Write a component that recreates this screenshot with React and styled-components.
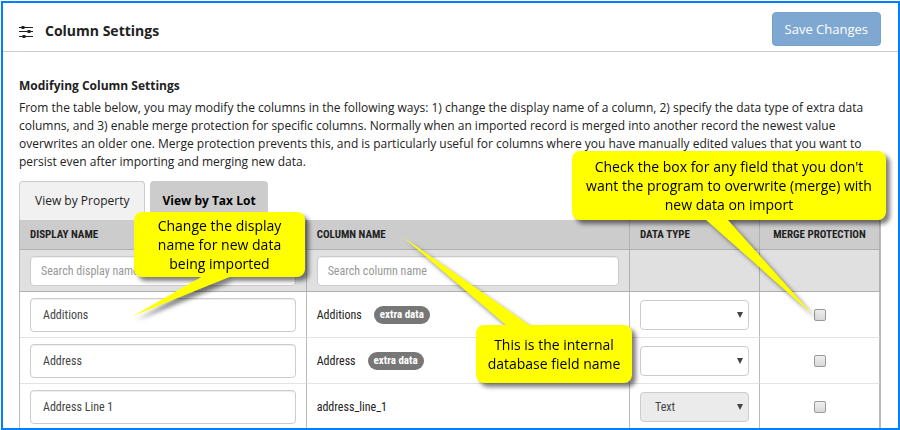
import React from "react";
import styled, { createGlobalStyle } from "styled-components";

const GlobalStyle = createGlobalStyle`
  *, *::before, *::after { box-sizing: border-box; }
  body {
    margin: 0;
    background: #fff;
    color: #222;
    font: 12px/18px "Open Sans", "Noto Sans", sans-serif;
  }
  button, input, select { font: inherit; color: inherit; }
`;

const condensed = `"Roboto Condensed", "Liberation Sans Narrow", Roboto, sans-serif`;

const Page = styled.div`
  position: relative;
  padding: 1px 0 0 1px;
`;

const Frame = styled.div`
  border: 2px solid #0080ff;
`;

const Header = styled.header`
  display: flex;
  align-items: center;
  gap: 12px;
  height: 49px;
  padding: 8px 17px 0 16px;
  border-bottom: 1px solid #ccc;
`;

const HeaderIcon = styled.svg`
  width: 14px;
  height: 14px;
  flex: none;
`;

const Title = styled.h1`
  flex: 1;
  margin: 0;
  font-size: 14px;
  line-height: 20px;
`;

const SaveButton = styled.button`
  height: 34px;
  margin-bottom: 4px;
  padding: 0 12px;
  border: 1px solid #76a3cd;
  border-radius: 4px;
  background: #7ea8d1;
  color: #fff;
  font-size: 13px;
`;

const Content = styled.main`
  padding: 22px 17px 0 16px;
`;

const Heading = styled.h2`
  margin: 0 0 1px;
  font-size: 12px;
  line-height: 24px;
`;

const Intro = styled.p`
  margin: 0 0 10px;
`;

const Tabs = styled.div`
  display: flex;
  gap: 5px;
`;

const Tab = styled.button`
  height: 39px;
  padding: 0 15px;
  border: 1px solid #ccc;
  border-bottom: 0;
  border-radius: 4px 4px 0 0;
  background: ${(p) => (p.$active ? "#ccc" : "#f1f1f1")};
  color: ${(p) => (p.$active ? "#000" : "#222")};
  font-weight: ${(p) => (p.$active ? 700 : 400)};
  ${(p) => p.$active && "padding: 0 11px;"}
`;

const Table = styled.table`
  width: 100%;
  table-layout: fixed;
  border-spacing: 0;
  border-left: 1px solid #bbb;
  border-right: 1px solid #bbb;
  font-family: ${condensed};
`;

const Col = styled.col`
  width: ${(p) => p.$width};
`;

const HeadCell = styled.th`
  height: 30px;
  padding: 0 10px;
  border-right: 1px solid #b0b0b0;
  border-bottom: 1px solid #b0b0b0;
  background: #ccc;
  font-size: 11px;
  text-align: ${(p) => (p.$center ? "center" : "left")};
  white-space: nowrap;
`;

const FilterCell = styled.td`
  height: 42px;
  padding: 6px 10px 5px;
  border-right: 1px solid #b0b0b0;
  border-bottom: 1px solid #b0b0b0;
  background: #e0e0e0;
`;

const Row = styled.tr`
  &:last-child > td {
    padding-bottom: 4px;
    border-bottom: 0;
  }
`;

const Cell = styled.td`
  padding: 6px 10px 5px;
  border-right: 1px solid #bbb;
  border-bottom: 1px solid #e3e3e3;
  vertical-align: middle;
  text-align: ${(p) => (p.$center ? "center" : "left")};
`;

const TextField = styled.input`
  display: block;
  width: 100%;
  height: 34px;
  padding: 0 12px;
  border: 1px solid #ccc;
  border-radius: 4px;
  background: #fff;
  color: #444;
  box-shadow: inset 0 1px 1px rgba(0, 0, 0, 0.07);
`;

const SearchField = styled(TextField)`
  height: 30px;
  padding: 0 10px;
  &::placeholder { color: #999; opacity: 1; }
`;

const Name = styled.div`
  display: flex;
  align-items: center;
  gap: 12px;
`;

const Badge = styled.span`
  padding: 0 6px;
  border-radius: 9px;
  background: #777;
  color: #fff;
  font-size: 11px;
  font-weight: 700;
  line-height: 18px;
`;

const SelectBox = styled.div`
  display: grid;
  align-items: center;
  > * { grid-area: 1 / 1; }
`;

const Select = styled.select`
  appearance: none;
  width: 100%;
  height: 30px;
  padding: 0 14px;
  border: 1px solid #ccc;
  border-radius: 4px;
  background: #fff;
  color: #444;
  opacity: 1;
  &:disabled { background: #ebebeb; }
`;

const Arrow = styled.svg`
  justify-self: end;
  width: 6px;
  height: 6px;
  margin-right: 6px;
  pointer-events: none;
`;

const Checkbox = styled.input`
  appearance: none;
  display: block;
  width: 12px;
  height: 12px;
  margin: 0 auto;
  border: 1px solid #999;
  border-radius: 2px;
  background: linear-gradient(#eee, #d8d8d8);
  &:checked { background: #555; }
`;

const Annotations = styled.div`
  position: absolute;
  inset: 0;
  pointer-events: none;
  filter: drop-shadow(4px 4px 2px rgba(0, 0, 0, 0.5));
`;

const Pointers = styled.svg`
  position: absolute;
  top: 0;
  left: 0;
  width: 900px;
  height: 430px;
  fill: #ff0;
`;

const Callout = styled.div`
  position: absolute;
  left: ${(p) => p.$x}px;
  top: ${(p) => p.$y}px;
  width: ${(p) => p.$w}px;
  height: ${(p) => p.$h}px;
  display: flex;
  align-items: center;
  justify-content: center;
  border-radius: 8px;
  background: #ff0;
  color: #000;
  font-size: 14px;
  line-height: 19px;
  text-align: center;
`;

const rows = [
  { display: "Additions", name: "Additions", extra: true, type: "" },
  { display: "Address", name: "Address", extra: true, type: "" },
  { display: "Address Line 1", name: "address_line_1", extra: false, type: "Text" },
];

function SlidersIcon() {
  return (
    <HeaderIcon viewBox="0 0 14 14" aria-hidden="true">
      <path d="M0 3.5h14M0 7.5h14M0 12.5h14" stroke="#222" strokeWidth="1" />
      <path d="M2.500 2h3v3h-3zM8.500 6h3v3h-3zM3.500 11h3v3h-3z" fill="#222" />
    </HeaderIcon>
  );
}

function DataRow({ display, name, extra, type }) {
  return (
    <Row>
      <Cell><TextField aria-label={`Display name for ${name}`} defaultValue={display} /></Cell>
      <Cell><Name>{name}{extra && <Badge>extra data</Badge>}</Name></Cell>
      <Cell>
        <SelectBox>
          <Select aria-label={`Data type for ${name}`} defaultValue={type} disabled={!extra}>
            <option value="" />
            <option value="Text">Text</option>
          </Select>
          <Arrow viewBox="0 0 6 6" aria-hidden="true"><path d="M0 0h6L3 6z" fill="#444" /></Arrow>
        </SelectBox>
      </Cell>
      <Cell $center><Checkbox type="checkbox" aria-label={`Merge protection for ${name}`} /></Cell>
    </Row>
  );
}

export default function App() {
  return (
    <Page>
      <GlobalStyle />
      <Frame>
        <Header>
          <SlidersIcon />
          <Title>Column Settings</Title>
          <SaveButton type="button">Save Changes</SaveButton>
        </Header>
        <Content>
          <Heading>Modifying Column Settings</Heading>
          <Intro>
            From the table below, you may modify the columns in the following ways: 1) change the display name of a column, 2) specify the data type of extra data<br />
            columns, and 3) enable merge protection for specific columns. Normally when an imported record is merged into another record the newest value<br />
            overwrites an older one. Merge protection prevents this, and is particularly useful for columns where you have manually edited values that you want to<br />
            persist even after importing and merging new data.
          </Intro>
          <Tabs>
            <Tab type="button">View by Property</Tab>
            <Tab type="button" $active>View by Tax Lot</Tab>
          </Tabs>
          <Table>
            <colgroup>
              <Col />
              <Col $width="37.6%" />
              <Col $width="130px" />
              <Col $width="120px" />
            </colgroup>
            <thead>
              <tr>
                <HeadCell>DISPLAY NAME</HeadCell>
                <HeadCell>COLUMN NAME</HeadCell>
                <HeadCell>DATA TYPE</HeadCell>
                <HeadCell $center>MERGE PROTECTION</HeadCell>
              </tr>
            </thead>
            <tbody>
              <tr>
                <FilterCell><SearchField aria-label="Search display name" placeholder="Search display name" /></FilterCell>
                <FilterCell><SearchField aria-label="Search column name" placeholder="Search column name" /></FilterCell>
                <FilterCell />
                <FilterCell />
              </tr>
              {rows.map((row) => <DataRow key={row.name} {...row} />)}
            </tbody>
          </Table>
        </Content>
      </Frame>
      <Annotations>
        <Pointers viewBox="0 0 900 430" aria-hidden="true">
          <path d="M133 316 203 276H232zM403 237 508 327H532zM813 315 705 219H727z" />
        </Pointers>
        <Callout $x={134} $y={212} $w={171} $h={65}>Change the display<br />name for new data<br />being imported</Callout>
        <Callout $x={476} $y={325} $w={156} $h={58}>This is the internal<br />database field name</Callout>
        <Callout $x={572} $y={151} $w={314} $h={69}>Check the box for any field that you don't<br />want the program to overwrite (merge) with<br />new data on import</Callout>
      </Annotations>
    </Page>
  );
}
